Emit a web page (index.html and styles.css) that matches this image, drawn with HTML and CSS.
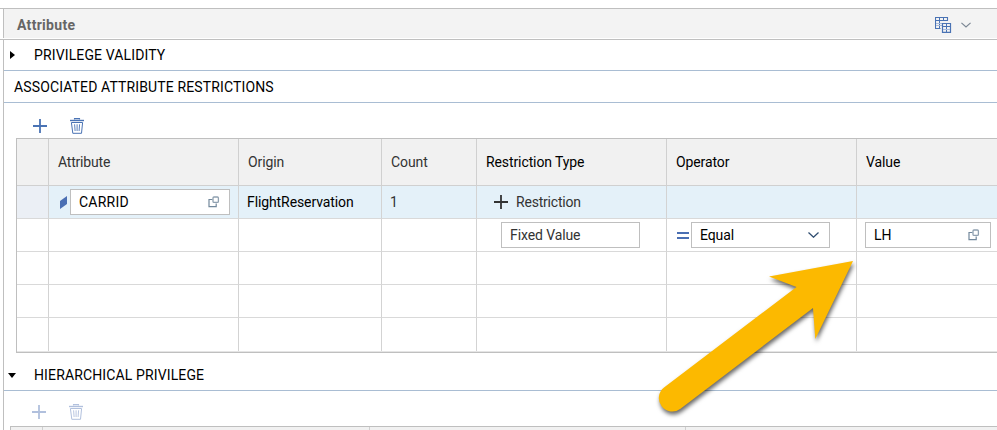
FILE: index.html
```html
<!DOCTYPE html>
<html lang="en">
<head>
<meta charset="utf-8">
<title>Attribute</title>
<link rel="stylesheet" href="styles.css">
</head>
<body>
<svg class="defs" width="0" height="0" aria-hidden="true">
  <symbol id="plus" viewBox="0 0 14 14"><path d="M0 7H14M7 0V14" fill="none" stroke="currentColor" stroke-width="1.8"/></symbol>
  <symbol id="trash" viewBox="0 0 14 16"><g fill="none" stroke="currentColor"><path d="M0 2.5H14" stroke-width="1.4"/><path d="M4.5 1.5V.6H9.5V1.5" stroke-width="1.1"/><path d="M1.4 4.5H12.6L11.5 15.3H2.8Z" stroke-width="1"/><path d="M4.6 6.3L5.1 13M7.1 6.3V13M9.6 6.3L9.1 13" stroke-width=".9"/></g></symbol>
  <symbol id="help" viewBox="0 0 12 12"><g fill="none"><path d="M4.5 3.5H1V10.7H8.2V7.5" stroke="#72889c" stroke-width="1.2"/><rect x="5" y="1" width="5.4" height="5.4" rx="1" stroke="#8fa0b0" stroke-width="1.3"/></g></symbol>
  <symbol id="chevron" viewBox="0 0 11 6"><path d="M.5 .6L5.5 5.2L10.5 .6" fill="none" stroke="currentColor" stroke-width="1.3"/></symbol>
</svg>
<div class="frame">
  <header class="bar">
    <h1 class="bar-title">Attribute</h1>
    <svg class="columns" width="17" height="17" viewBox="0 0 17 17" fill="none" stroke="#4a73b4"><path d="M5.5 12.5H.5V1.5H12.5V5" stroke-width="1.1"/><path d="M.5 4.5H12.5M4.5 1.5V12.5M8.5 1.5V4.5"/><path d="M1 7.5H7M1 9.5H7" stroke="#a9bcdb"/><path d="M7.5 7.5H15.5V16.3H7.5Z" stroke-width="1.2"/><path d="M7.5 10.5H15.5M11.5 7.5V16"/><path d="M8 13.5H15" stroke="#a9bcdb"/></svg>
    <svg class="bar-chevron" width="10" height="6"><use href="#chevron"/></svg>
  </header>
  <main class="body">
    <section class="heading first"><i class="caret right"></i><span>PRIVILEGE VALIDITY</span></section>
    <section class="heading plain"><span>ASSOCIATED ATTRIBUTE RESTRICTIONS</span></section>
    <div class="tools">
      <svg width="14" height="14"><use href="#plus"/></svg>
      <svg width="14" height="16"><use href="#trash"/></svg>
    </div>
    <div class="table">
      <div class="row head">
        <div></div><div><span class="tight">Attribute</span></div><div><span>Origin</span></div><div><span>Count</span></div><div class="dark"><span>Restriction Type</span></div><div class="dark"><span>Operator</span></div><div class="dark"><span>Value</span></div>
      </div>
      <div class="row selected">
        <div class="selector"></div>
        <div class="attr"><svg class="gem" width="7" height="13"><path d="M0 5L7 0V8L0 13Z" fill="#4a6fb3"/></svg><div class="field"><span class="code">CARRID</span><svg class="help" width="12" height="12"><use href="#help"/></svg></div></div>
        <div class="origin"><span>FlightReservation</span></div>
        <div class="count">1</div>
        <div class="add"><svg width="14" height="14"><use href="#plus"/></svg><span class="tight">Restriction</span></div>
        <div></div><div></div>
      </div>
      <div class="row">
        <div></div><div></div><div></div><div></div>
        <div class="kind"><div class="field muted"><span>Fixed Value</span></div></div>
        <div class="oper"><svg class="equals" width="12" height="7"><path d="M0 1H12M0 6H12" stroke="#4a6fb3" stroke-width="2"/></svg><div class="field"><span>Equal</span><svg class="down" width="11" height="6"><use href="#chevron"/></svg></div></div>
        <div class="val"><div class="field"><span>LH</span><svg class="help" width="12" height="12"><use href="#help"/></svg></div></div>
      </div>
      <div class="row"><div></div><div></div><div></div><div></div><div></div><div></div><div></div></div>
      <div class="row"><div></div><div></div><div></div><div></div><div></div><div></div><div></div></div>
      <div class="row last"><div></div><div></div><div></div><div></div><div></div><div></div><div></div></div>
    </div>
    <section class="heading hier"><i class="caret down-caret"></i><span>HIERARCHICAL PRIVILEGE</span></section>
    <div class="tools disabled">
      <svg width="14" height="14"><use href="#plus"/></svg>
      <svg width="14" height="16"><use href="#trash"/></svg>
    </div>
    <div class="lower"><div></div><div></div><div></div><div></div></div>
  </main>
</div>
<svg class="arrow" width="220" height="180" viewBox="650 250 220 180"><path d="M853 261L769 276.5L796.5 287L664 387.5A13 13 0 0 0 680.5 408.7L813 308L815.3 339Z" fill="#fcb900"/></svg>
</body>
</html>
```
FILE: styles.css
```css
* { box-sizing: border-box; }
body { margin: 0; height: 430px; overflow: hidden; background: #fff; color: #000; font: 14px/20px Roboto, "Liberation Sans", sans-serif; }
svg { display: block; flex: none; }
span { white-space: nowrap; }
.defs { position: absolute; }
.frame { padding-top: 8px; height: 430px; overflow: hidden; }
.bar { display: flex; align-items: center; height: 30px; margin-bottom: 1px; padding: 3px 26px 0 14px; background: linear-gradient(#bfbfbf, #bfbfbf) 0 0 / 100% 1px no-repeat, #f3f3f3; border-left: 3px solid #fff; box-shadow: inset 1px 0 #bfbfbf; color: #666; }
.bar-title { flex: 1; margin: 0; font: bold 14px/20px Roboto, sans-serif; letter-spacing: .3px; }
.columns { margin-right: 9px; }
.bar-chevron { color: #7b8794; }
.bar::before { content: ""; position: absolute; left: 0; top: 8px; width: 3px; height: 1px; background: #bfbfbf; }
.body { border-top: 1px solid #bfbfbf; padding-left: 3px; background: linear-gradient(#bfbfbf, #bfbfbf) 3px 0 / 1px 100% no-repeat; height: 391px; overflow: hidden; }
.heading { display: flex; align-items: center; border-bottom: 1px solid #a9bdd3; margin-left: 1px; letter-spacing: .13px; }
.first { height: 31px; padding-left: 6px; }
.plain { height: 32px; padding-left: 10px; }
.hier { height: 38px; padding: 7px 0 0 4px; }
.caret { display: block; border: 4px solid transparent; }
.right { border-left: 5px solid #000; border-right: 0; margin-right: 19px; }
.down-caret { border-top: 5px solid #000; border-bottom: 0; margin-right: 18px; }
.tools { display: flex; gap: 23px; align-items: center; height: 35px; padding: 11px 0 0 30px; color: #4a73b4; }
.tools.disabled { padding: 7px 0 0 29px; }
.disabled { color: #b1c0dd; }
.table { margin-left: 13px; border: 1px solid #bfbfbf; border-right: 0; }
.row { display: grid; grid-template-columns: 32px 190px 143px 95px 190px 190px 140px; height: 33px; letter-spacing: -.1px; }
.row > div { border-right: 1px solid #d3d3d3; border-bottom: 1px solid #d9d9d9; display: flex; align-items: center; }
.row > div:last-child { border-right: 0; }
.tight { letter-spacing: -.2px; }
.code { letter-spacing: .25px; }
.head { height: 47px; background: #f1f1f1; color: #333; }
.row.head > div { padding-left: 9px; border-color: #d0d0d0; }
.row .dark { color: #000; }
.last { height: 34px; background: linear-gradient(#e5e5e5, #e5e5e5) 0 100% / 100% 1px no-repeat; }
.row.last > div { border-bottom: 0; margin-bottom: 1px; }
.selected { background: #e4f1f9; }
.selector { background: #ebeff5; }
.row > .attr { padding-left: 11px; }
.gem { margin-right: 3px; }
.field { display: flex; align-items: center; justify-content: space-between; width: 160px; height: 26px; border: 1px solid #bfbfbf; background: #fff; padding: 0 10px 0 8px; color: #000; }
.attr .field { padding-right: 9px; }
.row > .origin { padding-left: 8px; }
.row > .count { padding-left: 8px; color: #333; }
.row > .add { padding-left: 17px; gap: 8px; color: #333; }
.row > .kind { padding-left: 24px; }
.kind .field, .oper .field { width: 139px; }
.muted { color: #333; }
.row > .oper { padding-left: 10px; }
.equals { margin-right: 2px; }
.down { color: #2f4d70; }
.row > .val { padding-left: 8px; }
.val .field { width: 126px; }
.lower { display: grid; grid-template-columns: 32px 327px 316px 1fr; height: 10px; margin-left: 7px; border: 1px solid #bfbfbf; border-right: 0; background: #f1f1f1; }
.lower > div { border-right: 1px solid #d0d0d0; }
.lower > div:last-child { border-right: 0; }
.arrow { position: absolute; left: 650px; top: 250px; filter: drop-shadow(1px 3px 2px rgba(0, 0, 0, .6)); }
```
